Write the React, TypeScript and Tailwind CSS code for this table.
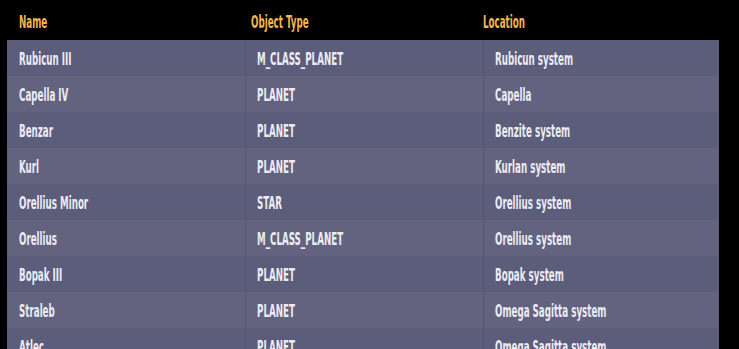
const rows = [
	["Rubicun III", "M_CLASS_PLANET", "Rubicun system"],
	["Capella IV", "PLANET", "Capella"],
	["Benzar", "PLANET", "Benzite system"],
	["Kurl", "PLANET", "Kurlan system"],
	["Orellius Minor", "STAR", "Orellius system"],
	["Orellius", "M_CLASS_PLANET", "Orellius system"],
	["Bopak III", "PLANET", "Bopak system"],
	["Straleb", "PLANET", "Omega Sagitta system"],
	["Atlec", "PLANET", "Omega Sagitta system"],
];

const font = { fontFamily: '"DejaVu Sans Condensed", "DejaVu Sans", sans-serif' };

// condensed look: squeeze the glyphs horizontally
const Narrow = ({ children }: { children: string }) => (
	<span className="inline-block origin-left scale-x-[0.57] whitespace-nowrap">{children}</span>
);

const App = () => {
	return (
		<div className="h-[349px] w-[739px] overflow-hidden bg-black" style={font}>
			<div className="grid h-10 grid-cols-[232px_232px_1fr] items-center pt-[5px] pl-[19px] text-[17px] font-bold text-[#f4b64c]">
				<Narrow>Name</Narrow>
				<Narrow>Object Type</Narrow>
				<Narrow>Location</Narrow>
			</div>
			<div className="ml-[7px] w-[712px]">
				{rows.map((row, i) => (
					<div
						key={i}
						className={`grid h-9 grid-cols-[238px_238px_1fr] text-[17px] font-bold text-[#ececf4] ${
							i % 2 === 0 ? "bg-[#5c5c7b]" : "bg-[#63637f]"
						}`}
					>
						{row.map((cell, j) => (
							<div
								key={j}
								className={`flex items-center overflow-hidden pt-[3px] ${
									j > 0 ? "border-l border-[#56556f] pl-[11px]" : "pl-3"
								}`}
							>
								<Narrow>{cell}</Narrow>
							</div>
						))}
					</div>
				))}
			</div>
		</div>
	);
};

export default App;
